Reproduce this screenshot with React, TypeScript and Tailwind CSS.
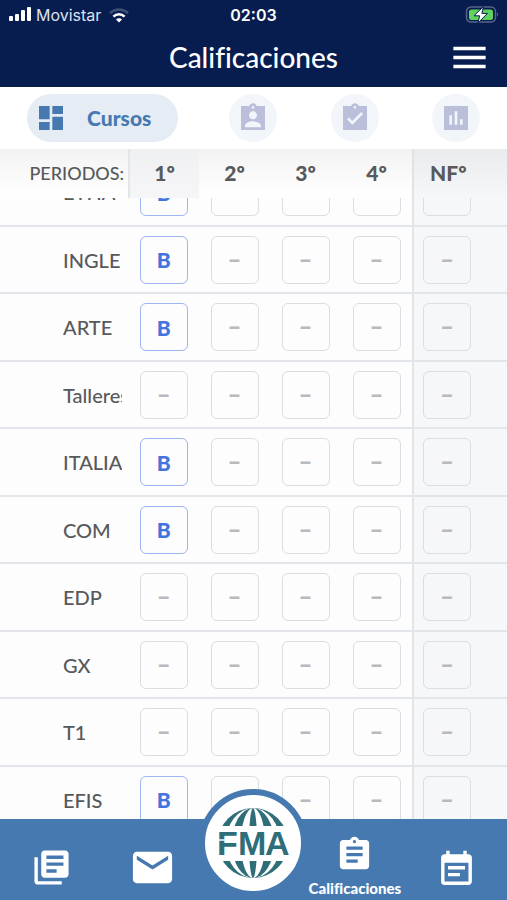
import React, { useLayoutEffect, useRef } from 'react';
import { MdAssignment, MdDashboard, MdEmail, MdEventNote, MdLibraryBooks, MdMenu } from 'react-icons/md';

const PERIODS = ['1º', '2º', '3º', '4º'];

const COURSES = [
  { name: 'ETHA', grade: 'B' },
  { name: 'INGLE', grade: 'B' },
  { name: 'ARTE', grade: 'B' },
  { name: 'Talleres', grade: null },
  { name: 'ITALIA', grade: 'B' },
  { name: 'COM', grade: 'B' },
  { name: 'EDP', grade: null },
  { name: 'GX', grade: null },
  { name: 'T1', grade: null },
  { name: 'EFIS', grade: 'B' },
];

// Square-cornered icon paths on a 24px grid
const TABS = [
  {
    label: 'Tutor',
    path: 'M21 3h-6.18C14.4 1.84 13.3 1 12 1s-2.4.84-2.82 2H3v18h18V3zm-9 0c.55 0 1 .45 1 1s-.45 1-1 1-1-.45-1-1 .45-1 1-1zm0 4c1.66 0 3 1.34 3 3s-1.34 3-3 3-3-1.34-3-3 1.34-3 3-3zm6 12H6v-1.4c0-2 4-3.1 6-3.1s6 1.1 6 3.1V19z',
  },
  {
    label: 'Asistencia',
    path: 'M21 3h-6.18C14.4 1.84 13.3 1 12 1s-2.4.84-2.82 2H3v18h18V3zm-9 0c.55 0 1 .45 1 1s-.45 1-1 1-1-.45-1-1 .45-1 1-1zm-2 14l-4-4 1.41-1.41L10 14.17l6.59-6.59L18 9l-8 8z',
  },
  {
    label: 'Reportes',
    path: 'M21 3H3v18h18V3zM9 17H7v-7h2v7zm4 0h-2V7h2v10zm4 0h-2v-4h2v4z',
  },
];

const StatusBar: React.FC = () => (
  <div className="grid grid-cols-3 items-center h-[30px] px-2 font-['Inter',sans-serif] text-base text-white">
    <div className="flex items-center gap-1 text-[#dde2ee]">
      <svg width="24" height="16" viewBox="0 0 24 16" fill="#fff">
        <rect x="1" y="9" width="4" height="5" rx="1" />
        <rect x="7" y="7" width="4" height="7" rx="1" />
        <rect x="13" y="3" width="4" height="11" rx="1" />
        <rect x="19" y="0" width="4" height="14" rx="1" />
      </svg>
      <span>Movistar</span>
      <svg className="ml-1" width="20" height="15" viewBox="0 0 20 15" fill="none" strokeWidth="2.6">
        <path d="M1 5.2a13 13 0 0 1 18 0" stroke="#3c4d76" />
        <path d="M4.4 8.6a8 8 0 0 1 11.2 0" stroke="#fff" />
        <path d="M7 11.4a4.2 4.2 0 0 1 6 0L10 14.5z" fill="#fff" />
      </svg>
    </div>
    <span className="text-center font-semibold">02:03</span>
    <svg className="justify-self-end" width="34" height="18" viewBox="0 0 34 18">
      <rect x="1.5" y="1" width="29" height="15" rx="4.5" fill="none" stroke="#56648a" strokeWidth="1.5" />
      <rect x="4" y="3.5" width="24" height="10.5" rx="2.5" fill="#5fd35c" />
      <path d="M32 6.5v4a2.3 2.3 0 0 0 0-4z" fill="#56648a" />
      <path d="M18.5 0.5L9 9.8h5.6L13 17 22.5 7.4h-5.6z" fill="#fff" stroke="#081d4f" strokeWidth="1" />
    </svg>
  </div>
);

const GradeBox: React.FC<{ grade?: string | null }> = ({ grade }) =>
  grade ? (
    <span className="flex items-center justify-center size-12 rounded-md border border-[#9db5f0] text-[21px] leading-none font-black text-[#4373dd]">
      {grade}
    </span>
  ) : (
    <span className="flex items-center justify-center size-12 rounded-md border border-[#dcdde0] pb-0.5 text-2xl leading-none font-black text-[#b9babd]">
      –
    </span>
  );

// Shared by the fixed heading and the scrolling body so both line up
const Columns: React.FC = () => (
  <colgroup>
    <col />
    {PERIODS.map((period) => (
      <col key={period} className="w-[14%]" />
    ))}
    <col className="w-[95px]" />
  </colgroup>
);

const GradesTable: React.FC = () => {
  const scroller = useRef<HTMLDivElement>(null);

  useLayoutEffect(() => {
    if (scroller.current) scroller.current.scrollTop = 39;
  }, []);

  return (
    <>
      <table className="w-full table-fixed border-separate border-spacing-0 text-[21px] leading-6 text-[#58595b]">
        <Columns />
        <thead>
          <tr className="h-[49px]">
            <th className="bg-linear-to-b from-[#f3f3f3] to-white p-0 pr-1 pb-0.5 text-right text-lg leading-6 font-medium whitespace-nowrap">
              PERIODOS:
            </th>
            {PERIODS.map((period) => (
              <th
                key={period}
                className="bg-linear-to-b from-[#f3f3f3] to-white p-0 pb-0.5 font-black nth-2:border-l-2 nth-2:border-[#e3e5e9] nth-2:from-[#eff0f2] nth-2:to-[#f6f6f8]"
              >
                {period}
              </th>
            ))}
            <th className="border-l-2 border-[#dfe3e7] bg-linear-to-b from-[#e9ebed] to-[#f6f7f9] p-0 pb-0.5 pl-4 text-left font-black">
              NFº
            </th>
          </tr>
        </thead>
      </table>

      <div ref={scroller} className="flex-1 min-h-0 overflow-y-auto overflow-x-hidden [scrollbar-width:none]">
        <table className="w-full table-fixed border-separate border-spacing-0 text-[#58595b]">
          <Columns />
          <tbody>
            {COURSES.map((course) => (
              <tr key={course.name} className="odd:h-[68px] even:h-[67px]">
                <th className="border-b-2 border-[#e2e5e9] p-0 pl-[63px] pr-1.5 text-left text-xl leading-6 font-medium">
                  <span className="block overflow-hidden whitespace-nowrap">{course.name}</span>
                </th>
                {PERIODS.map((period, i) => (
                  <td key={period} className="border-b-2 border-[#e2e5e9] p-0">
                    <div className="flex justify-center">
                      <GradeBox grade={i === 0 ? course.grade : null} />
                    </div>
                  </td>
                ))}
                <td className="border-b-2 border-l-2 border-[#e2e5e9] bg-[#f6f7f9] p-0 pl-[9px]">
                  <GradeBox />
                </td>
              </tr>
            ))}
          </tbody>
        </table>
      </div>
    </>
  );
};

const SchoolLogo: React.FC = () => (
  <svg className="size-20" viewBox="-4 -4 80 80">
    <g fill="#2f6e78">
      <circle cx="36" cy="36" r="35" />
      <ellipse cx="36" cy="36" rx="27" ry="35" fill="#fff" />
      <ellipse cx="36" cy="36" rx="21" ry="35" />
      <ellipse cx="36" cy="36" rx="12" ry="35" fill="#fff" />
      <ellipse cx="36" cy="36" rx="4" ry="35" />
    </g>
    <rect y="19" width="72" height="35" fill="#fff" />
    <g fill="#2f6e78" fontFamily="'Liberation Sans', sans-serif" fontWeight="700" fontSize="34">
      <text x="0" y="48">F</text>
      <text x="21" y="48">M</text>
      <text x="48" y="48">A</text>
    </g>
    <path d="M1 33h20" stroke="#fff" strokeWidth="1.5" />
  </svg>
);

const BottomNav: React.FC = () => (
  <nav className="relative z-20 grid grid-cols-5 h-[81px] bg-[#4779b1] text-white">
    <a href="#noticias" aria-label="Noticias" className="flex justify-center pt-7 pl-0.5">
      <MdLibraryBooks size={41} />
    </a>
    <a href="#mensajes" aria-label="Mensajes" className="flex justify-center pt-[25px]">
      <MdEmail size={47} />
    </a>
    <div className="flex justify-center">
      <a
        href="#inicio"
        aria-label="Inicio"
        className="absolute -top-[30px] flex items-center justify-center size-[108px] rounded-full border-6 border-[#4779b1] bg-white"
      >
        <SchoolLogo />
      </a>
    </div>
    <a href="#calificaciones" className="flex flex-col items-center pt-4">
      <MdAssignment size={39} />
      <span className="text-[15px] leading-7 font-black [font-variant-ligatures:none]">Calificaciones</span>
    </a>
    <a href="#agenda" aria-label="Agenda" className="flex justify-center pt-[30px]">
      <MdEventNote size={41} />
    </a>
  </nav>
);

const App: React.FC = () => {
  return (
    <div className="flex flex-col h-screen overflow-hidden bg-[#fdfdfe] font-['Lato',sans-serif]">
      {/* Header */}
      <header className="h-[87px] bg-[#081d4f] text-white">
        <StatusBar />
        <div className="grid grid-cols-[1fr_auto_1fr] items-center h-[54px] px-4">
          <h1 className="col-start-2 text-[28px] font-medium [font-variant-ligatures:none]">Calificaciones</h1>
          <button type="button" aria-label="Menú" className="justify-self-end">
            <MdMenu size={43} />
          </button>
        </div>
      </header>

      {/* Tabs */}
      <div className="grid grid-cols-5 items-center h-[62px] bg-white">
        <div className="col-span-2 flex justify-center pl-0.5">
          <button
            type="button"
            className="flex items-center gap-5 w-3/4 h-12 pl-2 rounded-full bg-[#e5ecf4] text-[21px] font-black text-[#4779b1]"
          >
            <MdDashboard size={32} />
            Cursos
          </button>
        </div>
        {TABS.map(({ label, path }) => (
          <button
            key={label}
            type="button"
            aria-label={label}
            className="flex items-center justify-center size-12 justify-self-center rounded-full bg-[#f2f6fa] text-[#bbbfda]"
          >
            <svg className="size-8" viewBox="0 0 24 24" fill="currentColor">
              <path d={path} />
            </svg>
          </button>
        ))}
      </div>

      <GradesTable />
      <BottomNav />
    </div>
  );
};

export default App;
